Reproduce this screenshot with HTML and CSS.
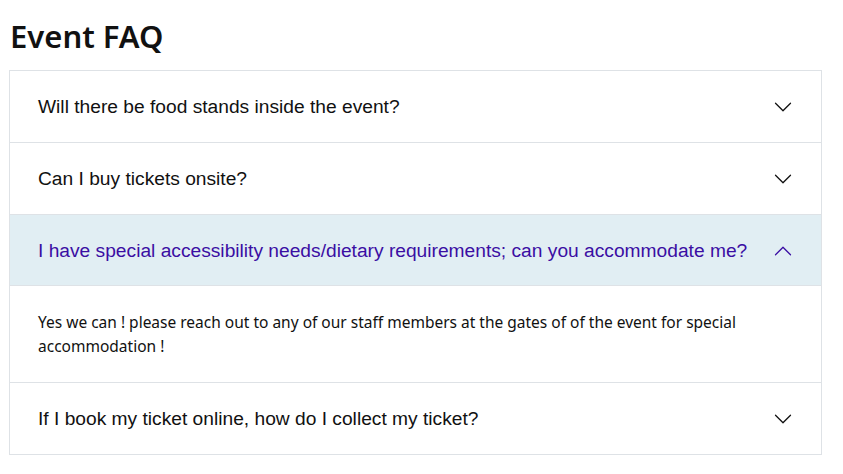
FILE: index.html
```html
<!DOCTYPE html>
<html lang="en">
<head>
    <meta charset="UTF-8">
    <meta name="viewport" content="width=device-width, initial-scale=1.0">
    <title>Event FAQ</title>
    <link rel="stylesheet" href="styles.css">
</head>
<body>
    <div class="faq">
        <h2 class="faq-title">Event FAQ</h2>
        <div class="accordion">
            <div class="accordion-item">
                <button class="accordion-button">
                    <span>Will there be food stands inside the event?</span>
                    <svg class="chevron" viewBox="0 0 16 16"><path d="M1.646 4.646a.5.5 0 0 1 .708 0L8 10.293l5.646-5.647a.5.5 0 0 1 .708.708l-6 6a.5.5 0 0 1-.708 0l-6-6a.5.5 0 0 1 0-.708z"/></svg>
                </button>
            </div>
            <div class="accordion-item">
                <button class="accordion-button">
                    <span>Can I buy tickets onsite?</span>
                    <svg class="chevron" viewBox="0 0 16 16"><path d="M1.646 4.646a.5.5 0 0 1 .708 0L8 10.293l5.646-5.647a.5.5 0 0 1 .708.708l-6 6a.5.5 0 0 1-.708 0l-6-6a.5.5 0 0 1 0-.708z"/></svg>
                </button>
            </div>
            <div class="accordion-item">
                <button class="accordion-button active">
                    <span>I have special accessibility needs/dietary requirements; can you accommodate me?</span>
                    <svg class="chevron" viewBox="0 0 16 16"><path d="M1.646 4.646a.5.5 0 0 1 .708 0L8 10.293l5.646-5.647a.5.5 0 0 1 .708.708l-6 6a.5.5 0 0 1-.708 0l-6-6a.5.5 0 0 1 0-.708z"/></svg>
                </button>
                <div class="accordion-body">
                    Yes we can ! please reach out to any of our staff members at the gates of of the event for special accommodation !
                </div>
            </div>
            <div class="accordion-item">
                <button class="accordion-button">
                    <span>If I book my ticket online, how do I collect my ticket?</span>
                    <svg class="chevron" viewBox="0 0 16 16"><path d="M1.646 4.646a.5.5 0 0 1 .708 0L8 10.293l5.646-5.647a.5.5 0 0 1 .708.708l-6 6a.5.5 0 0 1-.708 0l-6-6a.5.5 0 0 1 0-.708z"/></svg>
                </button>
            </div>
        </div>
    </div>
</body>
</html>
```

FILE: styles.css
```css
body{
    margin: 0;
    font-family: "Noto Sans", "DejaVu Sans", sans-serif;
    color: #212529;
    background: #fff;
}
.faq{
    width: 813px;
    padding: 0 9px;
}
.faq-title{
    margin: 0;
    padding: 15px 0 13px 1px;
    font-size: 31px;
    font-weight: 600;
    line-height: 42px;
    color: #111;
}
.accordion{
    border: 1px solid #dee2e6;
    border-bottom: none;
}
.accordion-item{
    border-bottom: 1px solid #dee2e6;
}
.accordion-button{
    display: flex;
    align-items: center;
    width: 100%;
    padding: 22px 28px;
    border: none;
    background: #fff;
    font-family: "Liberation Sans", Arial, sans-serif;
    font-size: 19.2px;
    line-height: 27px;
    color: #111;
    text-align: left;
}
.chevron{
    width: 20px;
    height: 20px;
    margin-left: auto;
    flex-shrink: 0;
    fill: #111;
}
.accordion-button.active{
    background: #e1eef3;
    color: #3b0ea3;
    border-bottom: 1px solid #dee2e6;
    padding-bottom: 21px;
}
.accordion-button.active .chevron{
    fill: #3b0ea3;
    transform: rotate(180deg);
}
.accordion-body{
    padding: 24px 28px 24px;
    font-size: 15.5px;
    line-height: 24px;
    color: #111;
}
```
